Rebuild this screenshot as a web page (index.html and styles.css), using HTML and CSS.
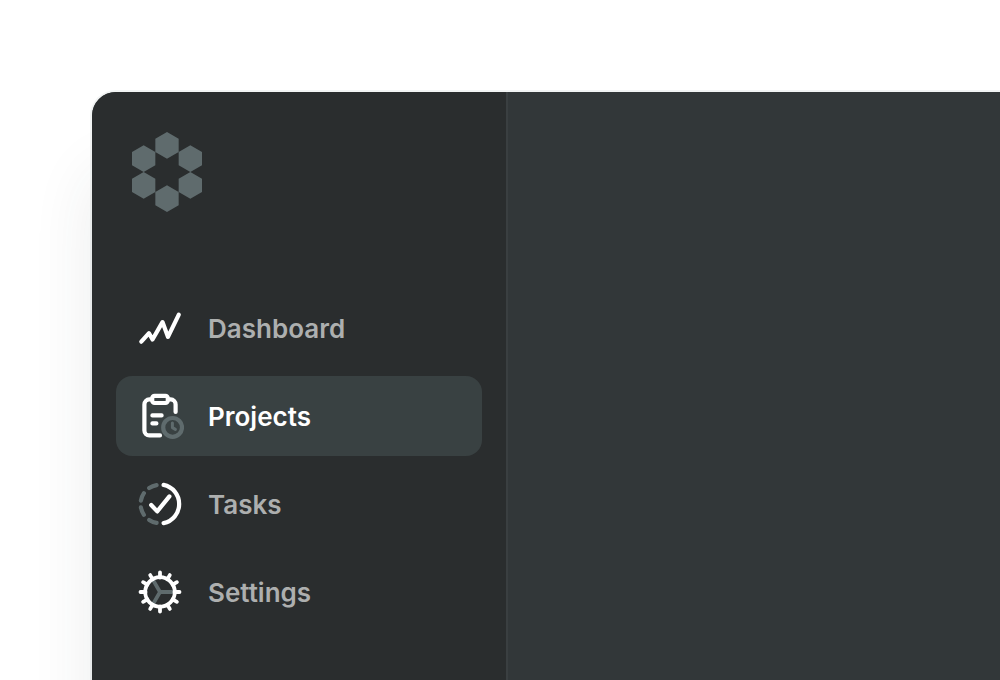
FILE: index.html
```html
<!DOCTYPE html>
<html lang="en">
<head>
<meta charset="utf-8">
<meta name="viewport" content="width=device-width, initial-scale=1">
<title>Projects</title>
<link rel="stylesheet" href="styles.css">
</head>
<body>
<div class="window">
  <aside class="sidebar">
    <a class="logo" href="#" aria-label="Home">
      <svg width="70" height="80" viewBox="0 0 210 240" aria-hidden="true">
        <path d="M105 0l35 20v40l-35 20-35-20V20zM35 40l35 20v40l-35 20L0 100V60zM175 40l35 20v40l-35 20-35-20V60zM35 120l35 20v40l-35 20-35-20v-40zM175 120l35 20v40l-35 20-35-20v-40zM105 160l35 20v40l-35 20-35-20v-40z"/>
      </svg>
    </a>
    <nav class="nav" aria-label="Main">
      <a class="item" href="#">
        <svg class="icon" viewBox="0 0 48 48" aria-hidden="true">
          <path d="M5.3 37.7L13 29.2l3.5 6.3 10-17.4L32 32.9l10.8-22.3"/>
        </svg>
        <span class="label">Dashboard</span>
      </a>
      <a class="item item-active" href="#" aria-current="page">
        <svg class="icon" viewBox="0 0 48 48" aria-hidden="true">
          <rect x="16.2" y="3.8" width="15.6" height="7.2" rx="2.4"/>
          <path d="M16 7.4h-2.6a5 5 0 0 0-5 5v26a5 5 0 0 0 5 5H24M32 7.4h2.6a5 5 0 0 1 5 5v7.6M16.4 23.4h9.2M16.4 31.4h4"/>
          <circle class="muted" cx="36.6" cy="35.4" r="9.4"/>
          <path class="muted hands" d="M36.4 31v4.6l3 1.8"/>
        </svg>
        <span class="label">Projects</span>
      </a>
      <a class="item" href="#">
        <svg class="icon" viewBox="0 0 48 48" aria-hidden="true">
          <path d="M27.6 4.9a19.5 19.5 0 0 1 0 38.2M15.2 25l6 6.4 12.2-15"/>
          <path class="muted" d="M13.2 8.1a19.3 19.3 0 0 1 7.4-3M4.9 20.6a19.3 19.3 0 0 1 3-7.4M4.9 27.4a19.3 19.3 0 0 0 3 7.4M13.2 39.9a19.3 19.3 0 0 0 7.4 3"/>
        </svg>
        <span class="label">Tasks</span>
      </a>
      <a class="item" href="#">
        <svg class="icon gear" viewBox="0 0 48 48" aria-hidden="true">
          <path class="muted spokes" d="M24 24h14M24 24l-7-12.1M24 24l-7 12.1"/>
          <circle cx="24" cy="24" r="14.8"/>
          <path d="M24 4.5v5M24 38.5v5M4.5 24h5M38.5 24h5M33.8 7.1l-2.5 4.3M16.7 36.6l-2.5 4.3M14.2 7.1l2.5 4.3M31.3 36.6l2.5 4.3M7.1 14.2l4.3 2.5M36.6 31.3l4.3 2.5M7.1 33.8l4.3-2.5M36.6 16.7l4.3-2.5"/>
        </svg>
        <span class="label">Settings</span>
      </a>
    </nav>
  </aside>
  <main class="content"></main>
</div>
</body>
</html>
```
FILE: styles.css
```css
* {
  box-sizing: border-box;
}

body {
  margin: 0;
  min-height: 100vh;
  display: flex;
  padding: 92px 0 0 92px;
  overflow: hidden;
  background: #fff;
  font-family: Inter, "Liberation Sans", sans-serif;
}

.window {
  flex: 1;
  display: flex;
  border-radius: 24px 0 0 0;
  background: #323739;
  box-shadow: 0 0 0 2px rgba(40, 60, 60, 0.06), 0 80px 64px rgba(40, 60, 58, 0.09);
}

.sidebar {
  flex: 0 0 416px;
  padding: 40px 24px;
  border-right: 2px solid #3a3f41;
  border-radius: 24px 0 0 0;
  background: #2a2d2e;
}

.logo {
  display: block;
  margin: 0 16px 76px;
}

.logo svg {
  display: block;
  fill: #5f6b6d;
}

.nav {
  display: flex;
  flex-direction: column;
  gap: 8px;
}

.item {
  display: flex;
  align-items: center;
  gap: 24px;
  height: 80px;
  padding: 0 20px;
  border-radius: 16px;
  color: #adafaf;
  font-size: 26px;
  font-weight: 600;
  line-height: 40px;
  text-decoration: none;
}

.item-active {
  background: #394142;
  color: #fff;
}

.label {
  padding-top: 2px;
}

.icon {
  flex: none;
  width: 48px;
  height: 48px;
  fill: none;
  stroke: #fff;
  stroke-width: 4.2;
  stroke-linecap: round;
  stroke-linejoin: round;
}

.gear {
  stroke-width: 3.8;
}

.muted {
  stroke: #5f6b6d;
}

.hands {
  stroke-width: 3;
}

.spokes {
  stroke-linecap: butt;
}

.content {
  flex: 1;
}
```
